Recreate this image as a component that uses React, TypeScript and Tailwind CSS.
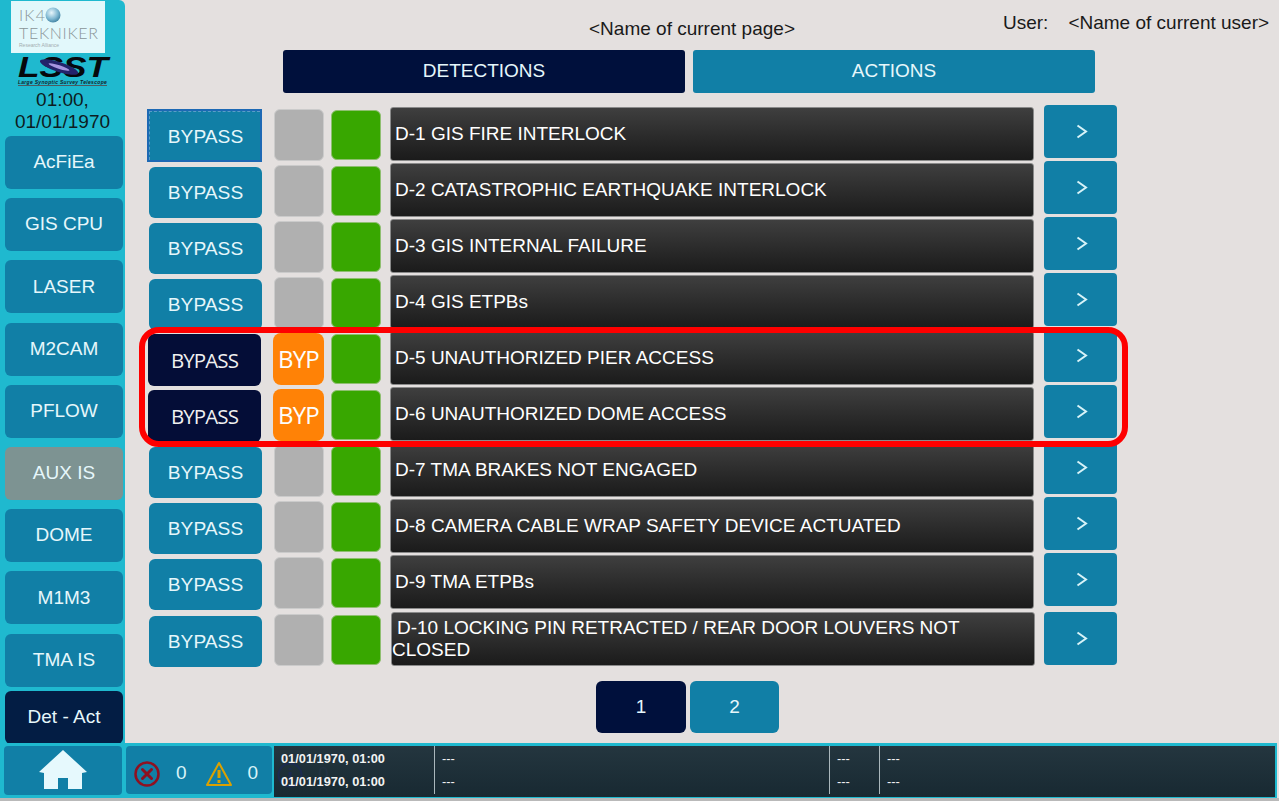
const NAV = ['AcFiEa', 'GIS CPU', 'LASER', 'M2CAM', 'PFLOW', 'AUX IS', 'DOME', 'M1M3', 'TMA IS', 'Det - Act']

const ROWS = [
  { label: 'D-1 GIS FIRE INTERLOCK' },
  { label: 'D-2 CATASTROPHIC EARTHQUAKE INTERLOCK' },
  { label: 'D-3 GIS INTERNAL FAILURE' },
  { label: 'D-4 GIS ETPBs' },
  { label: 'D-5 UNAUTHORIZED PIER ACCESS', bypassed: true },
  { label: 'D-6 UNAUTHORIZED DOME ACCESS', bypassed: true },
  { label: 'D-7 TMA BRAKES NOT ENGAGED' },
  { label: 'D-8 CAMERA CABLE WRAP SAFETY DEVICE ACTUATED' },
  { label: 'D-9 TMA ETPBs' },
  { label: 'D-10 LOCKING PIN RETRACTED / REAR DOOR LOUVERS NOT CLOSED' },
]

function Logos() {
  return (
    <>
      <div className="ml-[11px] mt-px flex h-[52px] w-[94px] shrink-0 flex-col bg-[#e2f8fb] pl-[8px] pt-[6px] font-['Lato'] font-light text-[#8a9598]">
        <div className="flex h-[15px] items-center">
          <span className="text-[16px] leading-none tracking-[1.2px]">IK4</span>
          <svg width="16" height="16" viewBox="0 0 16 16" className="-ml-[1px]">
            <defs>
              <radialGradient id="ball" cx="0.4" cy="0.35" r="0.7">
                <stop offset="0" stopColor="#e8f6fb" />
                <stop offset="0.6" stopColor="#7fb8d2" />
                <stop offset="1" stopColor="#3d7f9f" />
              </radialGradient>
            </defs>
            <circle cx="8" cy="8" r="7.5" fill="url(#ball)" />
          </svg>
        </div>
        <span className="mt-[3px] whitespace-nowrap text-[16px] leading-none tracking-[0.7px]">TEKNIKER</span>
        <span className="mt-[2px] whitespace-nowrap font-['Liberation_Sans'] text-[5px] font-normal leading-none text-[#a3adb0]">Research Alliance</span>
      </div>
      <div className="mt-[3px] flex shrink-0 flex-col items-center">
        <svg width="92" height="22" viewBox="0 0 92 22" className="overflow-visible">
          <text
            x="1"
            y="21"
            textLength="90"
            lengthAdjust="spacingAndGlyphs"
            fontFamily="Liberation Sans"
            fontSize="29"
            fontWeight="bold"
            fontStyle="italic"
            fill="#06080c"
          >
            LSST
          </text>
          <ellipse cx="42" cy="11" rx="20" ry="5" fill="#23236b" transform="rotate(18 42 11)" />
          <ellipse cx="42" cy="11" rx="11" ry="1.8" fill="#a695e0" transform="rotate(18 42 11)" />
        </svg>
        <span className="mt-px whitespace-nowrap border-b border-[#4d5a60] text-[5px] font-bold italic leading-[6px] tracking-[0.3px] text-[#10242b]">
          Large Synoptic Survey Telescope
        </span>
      </div>
    </>
  )
}

function DetectionRow({ label, bypassed, index }: { label: string; bypassed?: boolean; index: number }) {
  const last = index === 9
  return (
    <div className={last ? 'mt-[1px] flex h-[56px] items-start' : 'flex h-[56px] items-start'}>
      {bypassed ? (
        <button className="ml-[148px] mt-[5px] flex h-[52px] w-[113px] items-center justify-center rounded-md bg-[#040d37] pt-px font-['Open_Sans'] text-[20.5px] font-medium tracking-[-0.9px] text-[#f0f0f0]">
          BYPASS
        </button>
      ) : (
        <button
          className={
            index === 0
              ? 'relative ml-[147px] mt-[4px] flex h-[53px] w-[115px] items-center justify-center border-2 border-[#1d69b4] bg-[#117fa6] pl-[2px] pt-[3px] text-[19.2px] text-[#e6f7fb]'
              : 'ml-[149px] mt-[6px] flex h-[51px] w-[113px] items-center justify-center rounded-md bg-[#117fa6] pt-[2px] text-[19.2px] text-[#e6f7fb]'
          }
        >
          {index === 0 && <span className="absolute inset-0 border-l border-t border-dashed border-[#5b9bc9]" />}
          BYPASS
        </button>
      )}
      {bypassed ? (
        <div className="ml-[12px] mt-[4px] flex h-[52px] w-[51px] items-center justify-center rounded-lg bg-[#ff8206] font-['Open_Sans'] text-[24px] tracking-[-0.8px] text-[#fdfdfd]">
          BYP
        </div>
      ) : (
        <div className="ml-[12px] mt-[4px] h-[52px] w-[50px] rounded-md border border-[#cbcbcb] bg-[#b0b0b0]" />
      )}
      <div className="ml-[7px] mt-[5px] h-[50px] w-[50px] rounded-md border border-[#8fbf70] bg-[#38a700]" />
      <div
        className={
          last
            ? 'ml-[10px] mt-[2px] flex h-[54px] w-[644px] items-center rounded-[3px] border border-[#8a8a8a] bg-gradient-to-b from-[#3f3f3f] to-[#1b1b1b] text-[19px] leading-[22px] text-white'
            : 'ml-[9px] mt-[2px] flex h-[54px] w-[644px] items-center rounded-[3px] border border-[#8a8a8a] bg-gradient-to-b from-[#3f3f3f] to-[#1b1b1b] pl-[4px] text-[19px] text-white'
        }
      >
        {last ? (
          <span>
            <span className="pl-[5px]">D-10 LOCKING PIN RETRACTED / REAR DOOR LOUVERS NOT</span>
            <br />
            CLOSED
          </span>
        ) : (
          label
        )}
      </div>
      <button className={last ? 'ml-[9px] mt-[2px] flex h-[53px] w-[73px] items-center justify-center rounded-[4px] bg-[#117fa6] pl-[2px]' : 'ml-[10px] flex h-[53px] w-[73px] items-center justify-center rounded-[4px] bg-[#117fa6] pl-[2px]'}>
        <svg width="12" height="15" viewBox="0 0 12 15" fill="none" stroke="#d8f3f8" strokeWidth="2">
          <path d="M1.5 1.5 L10 7.5 L1.5 13.5" />
        </svg>
      </button>
    </div>
  )
}

export default function App() {
  return (
    <div className="relative flex h-[801px] w-[1279px] flex-col overflow-hidden bg-[#e4e0df] font-['Liberation_Sans',Arial,sans-serif]">
      <div className="flex h-[743px]">
        <aside className="flex w-[125px] shrink-0 flex-col overflow-hidden rounded-tr-md bg-[#1fb9cf]">
          <Logos />
          <div className="mt-[3px] shrink-0 text-center text-[19px] leading-[22px] text-[#0d1c22]">
            01:00,
            <br />
            01/01/1970
          </div>
          <div className="mt-[3px] flex shrink-0 flex-col gap-[9.2px] pl-[5px]">
            {NAV.map(name => (
              <button
                key={name}
                className={
                  name === 'Det - Act'
                    ? '-mt-[4.6px] h-[53px] w-[118px] rounded-md bg-[#031d44] text-[19px] text-[#e6f7fb]'
                    : name === 'AUX IS'
                      ? 'h-[53px] w-[118px] rounded-md bg-[#7d9392] text-[19px] text-[#e6f7fb]'
                      : 'h-[53px] w-[118px] rounded-md bg-[#117fa6] text-[19px] text-[#e6f7fb]'
                }
              >
                {name}
              </button>
            ))}
          </div>
        </aside>

        <main className="min-w-0 flex-1">
          <div className="flex h-[50px] text-[19px] text-[#1a1a1a]">
            <div className="mt-[15px] w-[1134px] text-center">&lt;Name of current page&gt;</div>
            <div className="-ml-[256px] mt-[9px] flex w-[276px] whitespace-nowrap">
              <span>User:</span>
              <span className="ml-[20px]">&lt;Name of current user&gt;</span>
            </div>
          </div>
          <div className="ml-[158px] flex gap-2">
            <button className="h-[43px] w-[402px] rounded-[3px] bg-[#00103c] text-[19px] text-[#e6f7fb]">DETECTIONS</button>
            <button className="h-[43px] w-[402px] rounded-[3px] bg-[#117fa6] text-[19px] text-[#e6f7fb]">ACTIONS</button>
          </div>
          <div className="-ml-[125px] mt-[12px]">
            {ROWS.map((row, i) => (
              <DetectionRow key={row.label} label={row.label} bypassed={row.bypassed} index={i} />
            ))}
          </div>
          <div className="ml-[471px] mt-[15px] flex gap-1">
            <button className="h-[52px] w-[90px] rounded-md bg-[#00103c] text-[19px] text-[#e6f7fb]">1</button>
            <button className="h-[52px] w-[89px] rounded-md bg-[#117fa6] text-[19px] text-[#e6f7fb]">2</button>
          </div>
        </main>
      </div>

      <footer className="flex h-[55px] w-[1277px] bg-[#1fb9cf] pb-px pr-[2px] pt-[3px]">
        <button className="ml-[4px] flex h-[49px] w-[118px] items-center justify-center rounded-[4px] bg-[#117fa6] pb-[2px]">
          <svg width="50" height="40" viewBox="0 0 50 40" fill="#e6f9fd">
            <path d="M25 0 L49 22 L44 23 L44 39 L30 39 L30 28 L20 28 L20 39 L6 39 L6 23 L1 22 Z" />
          </svg>
        </button>
        <div className="ml-[4px] flex h-[48px] w-[146px] items-center rounded-[4px] bg-[#117fa6] pl-[8px] pt-[7px] text-[19px] text-[#d8f3f8]">
          <svg width="26" height="26" viewBox="0 0 26 26" fill="none" stroke="#8f1020" strokeWidth="2.5">
            <circle cx="13" cy="13" r="11.5" />
            <path d="M8.5 8.5 L17.5 17.5 M17.5 8.5 L8.5 17.5" strokeWidth="3" strokeLinecap="round" />
          </svg>
          <span className="ml-[16px]">0</span>
          <svg className="ml-[19px]" width="26" height="26" viewBox="0 0 26 26" fill="none" stroke="#dba100" strokeWidth="2">
            <path d="M13 2 L25 24 L1 24 Z" strokeLinejoin="round" />
            <path d="M13 9 L13 17" strokeWidth="3" />
            <path d="M13 19 L13 22" strokeWidth="3" />
          </svg>
          <span className="ml-[16px]">0</span>
        </div>
        <div className="relative ml-[2px] flex h-[51px] min-w-0 flex-1 bg-gradient-to-b from-[#24363f] to-[#182932] text-[12.8px] text-[#f2f2f2]">
          <svg className="absolute left-[3px] top-[16px]" width="26" height="26" viewBox="0 0 26 26" fill="none" stroke="#1c2b50" strokeWidth="2">
            <circle cx="13" cy="13" r="11.5" />
            <path d="M13 10 L13 20 M13 6 L13 8" strokeWidth="3" />
          </svg>
          <span className="absolute left-[44px] top-[14px] text-[19px] text-[#233342]">0</span>
          <div className="relative flex h-[48px] w-[160px] flex-col justify-between py-[3px] pl-[7px] font-bold">
            <span>01/01/1970, 01:00</span>
            <span>01/01/1970, 01:00</span>
          </div>
          <div className="flex h-[48px] w-[395px] flex-col justify-between border-l border-[#aab7bc] py-[3px] pl-[7px]">
            <span>---</span>
            <span>---</span>
          </div>
          <div className="flex h-[48px] w-[50px] flex-col justify-between border-l border-[#aab7bc] py-[3px] pl-[7px]">
            <span>---</span>
            <span>---</span>
          </div>
          <div className="flex h-[48px] flex-1 flex-col justify-between border-l border-[#aab7bc] py-[3px] pl-[7px]">
            <span>---</span>
            <span>---</span>
          </div>
        </div>
      </footer>
      <div className="h-[3px] bg-[#b9b9b9]" />

      <div className="pointer-events-none absolute left-[139px] top-[327px] h-[120px] w-[989px] rounded-[20px] border-[6px] border-[#fe0000]" />
    </div>
  )
}
